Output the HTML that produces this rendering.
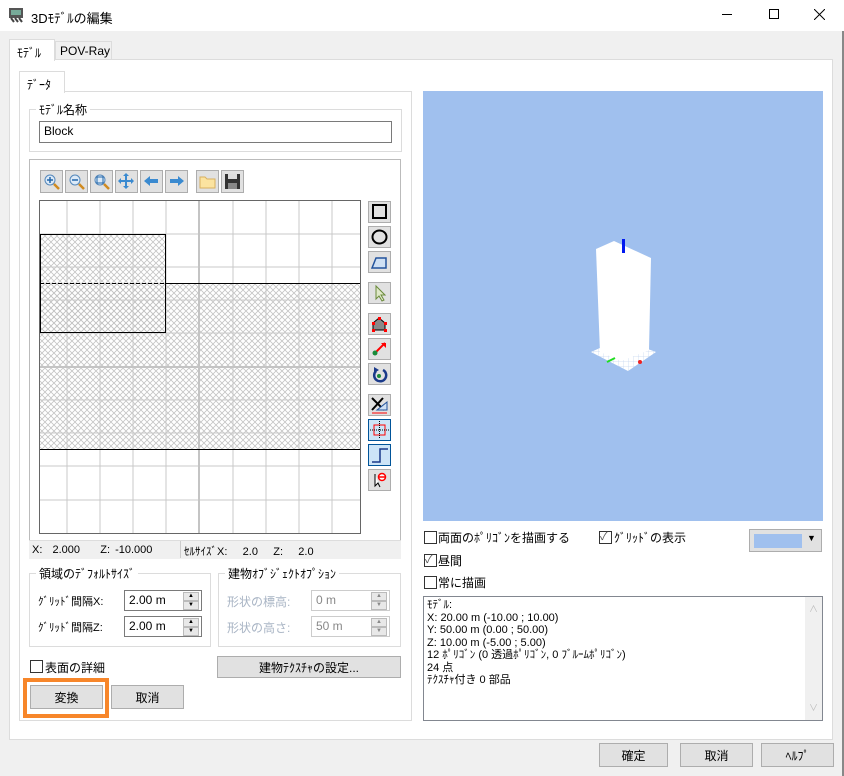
<!DOCTYPE html>
<html><head><meta charset="utf-8"><style>
*{box-sizing:border-box;margin:0;padding:0}
body{width:844px;height:776px;background:#f0f0f0;font-family:"Liberation Sans","Noto Sans CJK JP",sans-serif;font-size:12px;color:#000;position:relative;overflow:hidden}
.a{position:absolute}
.btn{position:absolute;background:#e1e1e1;border:1px solid #adadad;font-size:12px;display:flex;align-items:center;justify-content:center}
.grp{position:absolute;border:1px solid #dcdcdc}
.lg{position:absolute;background:#f0f0f0;padding:0 3px;top:-9px;left:6px;font-size:12px}
.inp{position:absolute;background:#fff;border:1px solid #7a7a7a;padding:2px 4px}
.spin{position:absolute;width:16px;height:18px;right:2px;top:1px}
.spin div{height:9px;background:#e8e8e8;border:1px solid #bbb;font-size:6px;line-height:7px;text-align:center}
.cb{position:absolute;width:13px;height:13px;border:1px solid #333;background:#fff}
.tb{position:absolute;width:23px;height:23px;background:#e1e1e1;border:1px solid #adadad}
.ico{position:absolute;width:23px;height:22px;background:#e1e1e1;border:1px solid #adadad}
</style></head><body>
<div class="a" style="left:0;top:0;width:844px;height:31px;background:#fff"></div>
<svg class="a" style="left:8px;top:7px" width="18" height="16"><rect x="1" y="1" width="14" height="10" fill="#555"/><rect x="3" y="3" width="10" height="5" fill="#7a9"/><path d="M3 11 L6 15 M7 11 L10 15 M11 11 L14 15" stroke="#444" stroke-width="2"/></svg>
<div class="a" style="left:31px;top:8px;font-size:13px">3Dﾓﾃﾞﾙの編集</div>
<div class="a" style="left:722px;top:14px;width:10px;height:1px;background:#000"></div>
<div class="a" style="left:769px;top:9px;width:10px;height:10px;border:1px solid #000"></div>
<svg class="a" style="left:814px;top:9px" width="11" height="11"><path d="M0 0L11 11M11 0L0 11" stroke="#000" stroke-width="1"/></svg>
<div class="a" style="left:842px;top:31px;width:2px;height:745px;background:#888"></div>

<div class="a" style="left:9px;top:59px;width:824px;height:681px;background:#fff;border:1px solid #dcdcdc"></div>
<div class="a" style="left:9px;top:39px;width:46px;height:22px;background:#fff;border:1px solid #dcdcdc;border-bottom:none;padding:4px 0 0 7px">ﾓﾃﾞﾙ</div>
<div class="a" style="left:55px;top:41px;width:57px;height:18px;background:#f0f0f0;border:1px solid #dcdcdc;border-bottom:none;padding:2px 0 0 4px">POV-Ray</div>

<div class="a" style="left:19px;top:91px;width:393px;height:630px;background:#fff;border:1px solid #dcdcdc"></div>
<div class="a" style="left:19px;top:71px;width:46px;height:22px;background:#fff;border:1px solid #dcdcdc;border-bottom:none;padding:4px 0 0 7px">ﾃﾞｰﾀ</div>

<div class="grp" style="left:29px;top:109px;width:373px;height:43px"><div class="lg" style="background:#fff">ﾓﾃﾞﾙ名称</div></div>
<div class="inp" style="left:39px;top:121px;width:353px;height:22px;font-size:12px">Block</div>

<div class="a" style="left:29px;top:159px;width:372px;height:400px;border:1px solid #bbb;background:#fff"></div>
<div class="tb" style="left:40px;top:170px"><svg width="21" height="21"><circle cx="9" cy="9" r="5" fill="#dbe9f7" stroke="#5588bb"/><path d="M6 9h6M9 6v6" stroke="#2266aa" stroke-width="1.5"/><path d="M13 13l5 5" stroke="#d08a20" stroke-width="2.5"/></svg></div>
<div class="tb" style="left:65px;top:170px"><svg width="21" height="21"><circle cx="9" cy="9" r="5" fill="#dbe9f7" stroke="#5588bb"/><path d="M6 9h6" stroke="#2266aa" stroke-width="1.5"/><path d="M13 13l5 5" stroke="#d08a20" stroke-width="2.5"/></svg></div>
<div class="tb" style="left:90px;top:170px"><svg width="21" height="21"><circle cx="9" cy="9" r="5" fill="#dbe9f7" stroke="#5588bb"/><rect x="6" y="6" width="6" height="6" fill="none" stroke="#2266aa"/><path d="M13 13l5 5" stroke="#d08a20" stroke-width="2.5"/></svg></div>
<div class="tb" style="left:115px;top:170px"><svg width="21" height="21"><path d="M10 2l3 3h-2v4h4v-2l3 3-3 3v-2h-4v4h2l-3 3-3-3h2v-4h-4v2l-3-3 3-3v2h4v-4h-2z" fill="#3a8ad0"/></svg></div>
<div class="tb" style="left:140px;top:170px"><svg width="21" height="21"><path d="M3 10l6-5v3h8v4h-8v3z" fill="#3a8ad0"/></svg></div>
<div class="tb" style="left:165px;top:170px"><svg width="21" height="21"><path d="M18 10l-6-5v3h-8v4h8v3z" fill="#3a8ad0"/></svg></div>
<div class="tb" style="left:196px;top:170px"><svg width="21" height="21"><path d="M3 6h5l2 2h8v9h-15z" fill="#fbe3a0" stroke="#d8b060"/></svg></div>
<div class="tb" style="left:221px;top:170px"><svg width="21" height="21"><rect x="3" y="3" width="15" height="15" fill="#333"/><rect x="6" y="3" width="9" height="5" fill="#ddd"/><rect x="6" y="12" width="9" height="6" fill="#888"/></svg></div>

<svg class="a" style="left:39px;top:200px" width="322" height="334">
<defs><pattern id="h" width="6" height="6" patternUnits="userSpaceOnUse"><path d="M0 0L6 6M6 0L0 6" stroke="#c4c4c4" stroke-width="0.8"/></pattern></defs>
<rect x="0.5" y="0.5" width="321" height="333" fill="#fff" stroke="#666"/>
<rect x="1" y="83" width="320" height="166" fill="url(#h)"/>
<rect x="1" y="34" width="126" height="99" fill="url(#h)"/>
<g stroke="#c8c8c8">
<path d="M28 1V333M61 1V333M94 1V333M127 1V333M194 1V333M227 1V333M260 1V333M293 1V333"/>
<path d="M1 34H321M1 67H321M1 100H321M1 133H321M1 200H321M1 233H321M1 266H321M1 300H321"/>
</g>
<path d="M160 1V333M1 167H321" stroke="#c4c4c4" stroke-width="2"/>
<rect x="1.5" y="34.5" width="125" height="98" fill="none" stroke="#000"/>
<path d="M127 83.5H321M1 249.5H321" stroke="#000"/>
<path d="M1 83.5H127" stroke="#000" stroke-dasharray="4 2"/>
</svg>
<div class="ico" style="left:368px;top:201px"><svg width="21" height="20"><rect x="4" y="3" width="13" height="13" fill="none" stroke="#000" stroke-width="2"/></svg></div>
<div class="ico" style="left:368px;top:226px"><svg width="21" height="20"><ellipse cx="10.5" cy="10" rx="7" ry="6.5" fill="none" stroke="#000" stroke-width="2"/></svg></div>
<div class="ico" style="left:368px;top:251px"><svg width="21" height="20"><path d="M3 16l4-10h10v10z" fill="#cfe0f3" stroke="#23539c" stroke-width="1.5"/></svg></div>
<div class="ico" style="left:368px;top:282px"><svg width="21" height="20"><path d="M7 3v13l3-3 3 5 2-1-3-5h4z" fill="#dfe8c8" stroke="#6a8a3a"/></svg></div>
<div class="ico" style="left:368px;top:313px"><svg width="21" height="20"><path d="M4 16v-7l6-5 6 5v7z" fill="#888" stroke="#000"/><g fill="red"><rect x="3" y="15" width="3" height="3"/><rect x="15" y="15" width="3" height="3"/><rect x="9" y="3" width="3" height="3"/><rect x="3" y="8" width="3" height="3"/><rect x="15" y="8" width="3" height="3"/></g></svg></div>
<div class="ico" style="left:368px;top:338px"><svg width="21" height="20"><path d="M7 13l9-9" stroke="red" stroke-width="2"/><path d="M12 4h5v5z" fill="red"/><circle cx="6" cy="14" r="2.5" fill="#1a8a3a"/></svg></div>
<div class="ico" style="left:368px;top:363px"><svg width="21" height="20"><path d="M14 6a6 6 0 1 1-7 1" fill="none" stroke="#1a3a8a" stroke-width="2.5"/><path d="M5 3l5 3-5 3z" fill="#1a3a8a"/><circle cx="10" cy="12" r="2" fill="#1a8a3a"/></svg></div>
<div class="ico" style="left:368px;top:394px"><svg width="21" height="20"><path d="M3 3l12 12M14 3L3 15" stroke="#000" stroke-width="2"/><path d="M8 15l10-8v8z" fill="#cfe0f3" stroke="#23539c"/><path d="M3 18h15" stroke="red"/></svg></div>
<div class="ico" style="left:368px;top:419px;background:#cce4f7;border-color:#005499"><svg width="21" height="20"><rect x="5" y="5" width="11" height="10" fill="none" stroke="red"/><path d="M10.5 1v18M1 10h19" stroke="#000" stroke-dasharray="1 1"/></svg></div>
<div class="ico" style="left:368px;top:444px;background:#cce4f7;border-color:#005499"><svg width="21" height="20"><path d="M3 17h8V4h8" fill="none" stroke="#1a3a8a" stroke-width="1.5"/></svg></div>
<div class="ico" style="left:368px;top:469px"><svg width="21" height="20"><path d="M6 4v12l3-3 2 4" fill="#fff" stroke="#000"/><circle cx="13" cy="7" r="3.5" fill="#fff" stroke="red" stroke-width="1.5"/><path d="M10 7h6" stroke="red" stroke-width="1.5"/></svg></div>
<div class="a" style="left:29px;top:540px;width:372px;height:19px;background:#f0f0f0;border-top:1px solid #ddd;font-size:11px;padding:3px 0 0 3px;word-spacing:2px">X:&nbsp; 2.000 &nbsp;&nbsp; Z: -10.000</div>
<div class="a" style="left:180px;top:541px;width:1px;height:17px;background:#ccc"></div>
<div class="a" style="left:184px;top:543px;font-size:11px">ｾﾙｻｲｽﾞX: &nbsp;&nbsp;&nbsp; 2.0 &nbsp;&nbsp;&nbsp; Z: &nbsp;&nbsp;&nbsp; 2.0</div>

<div class="grp" style="left:29px;top:573px;width:182px;height:74px"><div class="lg" style="background:#fff">領域のﾃﾞﾌｫﾙﾄｻｲｽﾞ</div></div>
<div class="a" style="left:38px;top:593px;font-size:11px">ｸﾞﾘｯﾄﾞ間隔X:</div>
<div class="inp" style="left:124px;top:590px;width:78px;height:21px">2.00 m<div class="spin"><div>▲</div><div>▼</div></div></div>
<div class="a" style="left:38px;top:619px;font-size:11px">ｸﾞﾘｯﾄﾞ間隔Z:</div>
<div class="inp" style="left:124px;top:616px;width:78px;height:21px">2.00 m<div class="spin"><div>▲</div><div>▼</div></div></div>

<div class="grp" style="left:218px;top:573px;width:183px;height:74px"><div class="lg" style="background:#fff">建物ｵﾌﾞｼﾞｪｸﾄｵﾌﾟｼｮﾝ</div></div>
<div class="a" style="left:227px;top:593px;color:#a8b4c4">形状の標高:</div>
<div class="inp" style="left:311px;top:590px;width:79px;height:21px;border-color:#ccc;color:#888">0 m<div class="spin"><div>▲</div><div>▼</div></div></div>
<div class="a" style="left:227px;top:619px;color:#a8b4c4">形状の高さ:</div>
<div class="inp" style="left:311px;top:616px;width:79px;height:21px;border-color:#ccc;color:#888">50 m<div class="spin"><div>▲</div><div>▼</div></div></div>

<div class="cb" style="left:30px;top:660px"></div>
<div class="a" style="left:45px;top:659px">表面の詳細</div>
<div class="btn" style="left:217px;top:656px;width:184px;height:22px">建物ﾃｸｽﾁｬの設定...</div>
<div class="a" style="left:23px;top:678px;width:86px;height:40px;border:4px solid #f7862a;background:#fff"></div>
<div class="btn" style="left:30px;top:685px;width:73px;height:24px">変換</div>
<div class="btn" style="left:111px;top:685px;width:73px;height:24px">取消</div>

<div class="a" style="left:423px;top:91px;width:400px;height:430px;background:#a0c0ee"></div>
<svg class="a" style="left:423px;top:91px" width="400" height="430">
<defs><pattern id="g" width="5" height="5" patternUnits="userSpaceOnUse"><path d="M0 0H5M0 0V5" stroke="#c8d8f0" stroke-width="0.8"/></pattern></defs>
<path d="M168 261L197 248L233 261L205 280Z" fill="#fff"/>
<path d="M168 261L197 248L233 261L205 280Z" fill="url(#g)"/>
<path d="M173 158L191 150L228 167L226 259L198 270L177 261Z" fill="#fff"/>
<rect x="199" y="148" width="3" height="14" fill="#0018f0"/>
<path d="M184 271l8-4" stroke="#2d2" stroke-width="2"/>
<circle cx="217" cy="271" r="2" fill="#e22"/>
</svg>
<div class="cb" style="left:424px;top:531px"></div>
<div class="a" style="left:438px;top:529px">両面のﾎﾟﾘｺﾞﾝを描画する</div>
<div class="cb" style="left:599px;top:531px;font-size:11px;line-height:11px;color:#555">✓</div>
<div class="a" style="left:614px;top:529px">ｸﾞﾘｯﾄﾞの表示</div>
<div class="a" style="left:749px;top:529px;width:73px;height:23px;background:#e1e1e1;border:1px solid #adadad"><div style="position:absolute;left:4px;top:4px;width:48px;height:14px;background:#a0c0ee"></div><div style="position:absolute;left:57px;top:3px;font-size:9px">▼</div></div>
<div class="cb" style="left:424px;top:554px;font-size:11px;line-height:11px;color:#555">✓</div>
<div class="a" style="left:438px;top:552px">昼間</div>
<div class="cb" style="left:424px;top:576px"></div>
<div class="a" style="left:438px;top:574px">常に描画</div>
<div class="a" style="left:423px;top:596px;width:400px;height:125px;background:#fff;border:1px solid #828790;font-size:11px;line-height:12.5px;padding:2px 3px">ﾓﾃﾞﾙ:<br>X: 20.00 m (-10.00 ; 10.00)<br>Y: 50.00 m (0.00 ; 50.00)<br>Z: 10.00 m (-5.00 ; 5.00)<br>12 ﾎﾟﾘｺﾞﾝ (0 透過ﾎﾟﾘｺﾞﾝ, 0 ﾌﾞﾙｰﾑﾎﾟﾘｺﾞﾝ)<br>24 点<br>ﾃｸｽﾁｬ付き 0 部品
<div style="position:absolute;right:0;top:0;width:17px;height:123px;background:#f0f0f0;color:#bbb;font-size:9px;text-align:center;padding-top:6px">∧<div style="position:absolute;bottom:6px;width:17px">∨</div></div></div>

<div class="btn" style="left:599px;top:743px;width:69px;height:24px">確定</div>
<div class="btn" style="left:680px;top:743px;width:73px;height:24px">取消</div>
<div class="btn" style="left:761px;top:743px;width:73px;height:24px">ﾍﾙﾌﾟ</div>
</body></html>
